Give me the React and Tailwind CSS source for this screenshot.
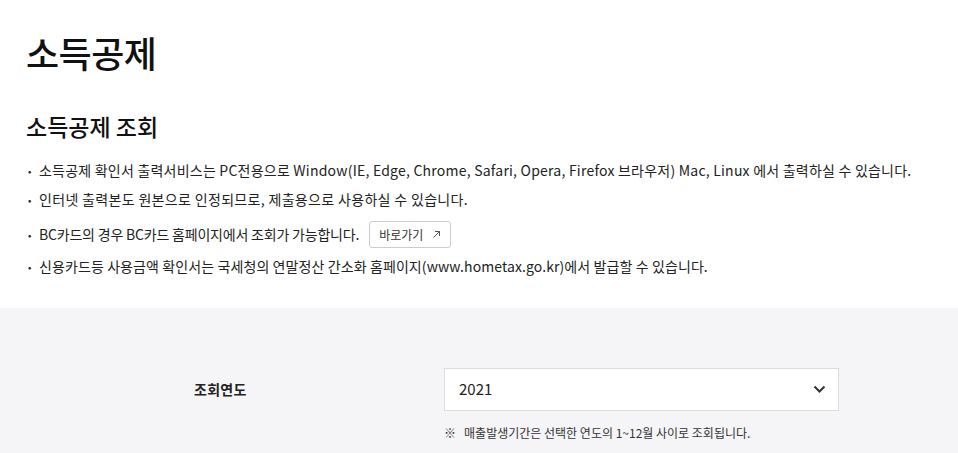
import React, { useState } from 'react';

const notices = [
  { cls: 'h-[29px] tracking-[0.22px]', text: '소득공제 확인서 출력서비스는 PC전용으로 Window(IE, Edge, Chrome, Safari, Opera, Firefox 브라우저) Mac, Linux 에서 출력하실 수 있습니다.' },
  { cls: 'h-[29px] tracking-[0.33px]', text: '인터넷 출력본도 원본으로 인정되므로, 제출용으로 사용하실 수 있습니다.' },
  { cls: 'h-[41px] tracking-[-0.2px]', text: 'BC' },
  { cls: 'h-[23px] tracking-[0.1px]', text: '신용카드등 사용금액 확인서는 국세청의 연말정산 간소화 홈페이지(www.hometax.go.kr)에서 발급할 수 있습니다.' },
];

const App = () => {
  const [year, setYear] = useState('2021');

  return (
    <div className="min-h-[453px] bg-white text-[#111] font-['Noto_Sans_CJK_KR','Noto_Sans',sans-serif]">
      {/* Header */}
      <div className="px-[26px] pt-[26px] pb-[30px]">
        <h1 className="h-[52px] flex items-center text-[36px] font-medium tracking-[-0.5px]">소득공제</h1>
        <h2 className="mt-[32px] h-[32px] flex items-center text-[23px] font-medium">소득공제 조회</h2>

        <ul className="mt-[14px] text-[14px] text-[#222]">
          {notices.map((item, i) => (
            <li key={i} className={`flex items-center ${item.cls}`}>
              <span className="w-[13px] shrink-0 pl-[2px] text-[10px] tracking-normal">•</span>
              {item.text === 'BC' ? (
                <span className="flex items-center">
                  BC카드의 경우 BC카드 홈페이지에서 조회가 가능합니다.
                  <button className="ml-[10px] flex items-center h-[27px] px-[9px] border border-[#ccc] rounded-[3px] bg-white text-[12px] text-[#333] tracking-normal">
                    바로가기
                    <svg className="ml-[9px]" width="9" height="9" viewBox="0 0 9 9" fill="none" stroke="#555" strokeWidth="1">
                      <path d="M1.5 7.5L7.5 1.5M3 1.5h4.5V6" />
                    </svg>
                  </button>
                </span>
              ) : (
                <span>{item.text}</span>
              )}
            </li>
          ))}
        </ul>
      </div>

      {/* Search form */}
      <div className="bg-[#f5f5f7] pt-[60px] pb-[20px] pl-[194px]">
        <div className="flex items-start">
          <label className="w-[250px] h-[43px] flex items-center text-[14px] font-bold text-[#222] tracking-[0.3px]">조회연도</label>
          <div className="w-[395px]">
            <div className="relative">
              <select
                value={year}
                onChange={(e) => setYear(e.target.value)}
                className="appearance-none w-full h-[43px] pl-[14px] bg-white border border-[#ddd] text-[15px] text-[#222] outline-none"
              >
                <option value="2021">2021</option>
                <option value="2020">2020</option>
                <option value="2019">2019</option>
              </select>
              <svg className="absolute right-[13px] top-[17px] pointer-events-none" width="13" height="9" viewBox="0 0 13 9" fill="none" stroke="#333" strokeWidth="2">
                <path d="M1.5 1.5L6.5 6.5L11.5 1.5" />
              </svg>
            </div>
            <p className="mt-[13px] h-[18px] flex items-center text-[12px] text-[#333]">※&nbsp;&nbsp;&nbsp;매출발생기간은 선택한 연도의 1~12월 사이로 조회됩니다.</p>
          </div>
        </div>
      </div>
    </div>
  );
};

export default App;
